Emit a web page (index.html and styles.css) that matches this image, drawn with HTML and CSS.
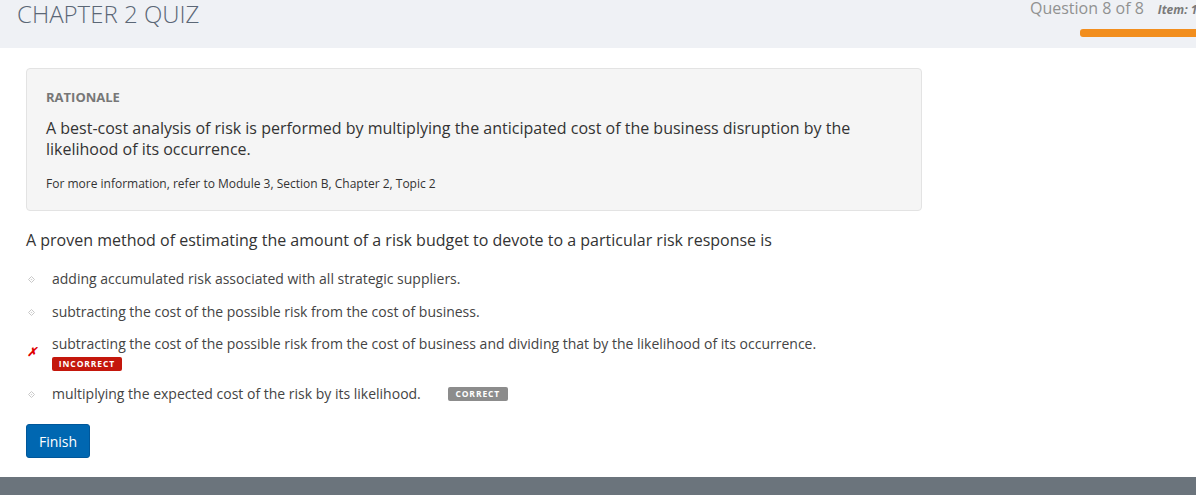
FILE: index.html
```html
<!DOCTYPE html>
<html lang="en">
<head>
<meta charset="utf-8">
<title>Chapter 2 Quiz</title>
<link rel="stylesheet" href="styles.css">
</head>
<body>
<header class="topbar">
  <h1 class="quiz-title">CHAPTER 2 QUIZ</h1>
  <div class="progress">
    <div class="progress-text"><span class="q-count">Question 8 of 8</span><span class="item-label">Item: 1</span></div>
    <div class="progress-bar"></div>
  </div>
</header>
<main class="content">
  <section class="rationale">
    <h2 class="rationale-title">RATIONALE</h2>
    <p class="rationale-body">A best-cost analysis of risk is performed by multiplying the anticipated cost of the business disruption by the likelihood of its occurrence.</p>
    <p class="rationale-ref">For more information, refer to Module 3, Section B, Chapter 2, Topic 2</p>
  </section>
  <p class="question">A proven method of estimating the amount of a risk budget to devote to a particular risk response is</p>
  <ul class="options">
    <li class="option">
      <span class="marker"><svg width="7" height="7" viewBox="0 0 7 7"><path d="M3.5 0.5 L6.5 3.5 L3.5 6.5 L0.5 3.5 Z" fill="none" stroke="#c8c8c8" stroke-width="1"/><circle cx="3.5" cy="3.5" r="0.8" fill="#d4d4d4"/></svg></span>
      <div class="option-body"><span class="option-text">adding accumulated risk associated with all strategic suppliers.</span></div>
    </li>
    <li class="option">
      <span class="marker"><svg width="7" height="7" viewBox="0 0 7 7"><path d="M3.5 0.5 L6.5 3.5 L3.5 6.5 L0.5 3.5 Z" fill="none" stroke="#c8c8c8" stroke-width="1"/><circle cx="3.5" cy="3.5" r="0.8" fill="#d4d4d4"/></svg></span>
      <div class="option-body"><span class="option-text">subtracting the cost of the possible risk from the cost of business.</span></div>
    </li>
    <li class="option option-wrong">
      <span class="marker marker-wrong">&#x2717;</span>
      <div class="option-body option-stack">
        <span class="option-text">subtracting the cost of the possible risk from the cost of business and dividing that by the likelihood of its occurrence.</span>
        <span class="badge badge-incorrect">INCORRECT</span>
      </div>
    </li>
    <li class="option">
      <span class="marker"><svg width="7" height="7" viewBox="0 0 7 7"><path d="M3.5 0.5 L6.5 3.5 L3.5 6.5 L0.5 3.5 Z" fill="none" stroke="#c8c8c8" stroke-width="1"/><circle cx="3.5" cy="3.5" r="0.8" fill="#d4d4d4"/></svg></span>
      <div class="option-body option-inline"><span class="option-text">multiplying the expected cost of the risk by its likelihood.</span><span class="badge badge-correct">CORRECT</span></div>
    </li>
  </ul>
  <button class="finish" type="button">Finish</button>
</main>
<footer class="footer"></footer>
</body>
</html>
```

FILE: styles.css
```css
* { box-sizing: border-box; }
html, body { margin: 0; padding: 0; }
body {
  font-family: "Open Sans", "Liberation Sans", sans-serif;
  color: #333;
  background: #fff;
  overflow: hidden;
  height: 495px;
}
.topbar {
  height: 48px;
  background: #eff1f5;
  display: flex;
  justify-content: space-between;
  align-items: flex-start;
  padding-left: 17px;
}
.quiz-title {
  margin: -1px 0 0;
  font-size: 24px;
  line-height: 30px;
  font-weight: 300;
  color: #5b6776;
  letter-spacing: 0;
}
.progress {
  width: 166px;
  white-space: nowrap;
}
.progress-text {
  display: flex;
  align-items: baseline;
  gap: 14px;
  line-height: 16px;
}
.q-count {
  font-size: 16px;
  color: #919191;
}
.item-label {
  font-size: 12px;
  font-style: italic;
  font-weight: 700;
  color: #7a7a7a;
}
.progress-bar {
  margin-top: 11px;
  margin-left: 50px;
  width: 116px;
  height: 8px;
  background: #f28e1e;
  border-radius: 3px 0 0 3px;
}
.content {
  padding: 20px 0 0 26px;
}
.rationale {
  width: 896px;
  background: #f5f5f5;
  border: 1px solid #e3e3e3;
  border-radius: 4px;
  padding: 20px 19px 17px;
}
.rationale-title {
  margin: 0;
  font-size: 13px;
  line-height: 16px;
  font-weight: 700;
  color: #777;
}
.rationale-body {
  margin: 13px 0 0;
  font-size: 16px;
  line-height: 21px;
  color: #333;
}
.rationale-ref {
  margin: 15px 0 0;
  font-size: 12px;
  line-height: 18px;
  color: #333;
}
.question {
  margin: 18px 0 0;
  font-size: 16px;
  line-height: 22px;
  color: #333;
}
.options {
  list-style: none;
  margin: 18px 0 0;
  padding: 0;
  display: flex;
  flex-direction: column;
  gap: 13px;
}
.option {
  display: flex;
  align-items: flex-start;
}
.option-wrong {
  margin-top: -1px;
}
.marker {
  width: 26px;
  flex: none;
  height: 20px;
  display: flex;
  align-items: center;
  padding-left: 2px;
}
.marker-wrong {
  color: #e00000;
  font-size: 12px;
  font-weight: 700;
  font-style: italic;
  padding-top: 15px;
  padding-left: 1px;
}
.option-body {
  font-size: 14px;
  line-height: 20px;
  color: #444;
}
.option-stack {
  display: flex;
  flex-direction: column;
  align-items: flex-start;
}
.option-inline {
  display: flex;
  align-items: center;
  gap: 27px;
}
.badge {
  display: inline-block;
  color: #fff;
  font-size: 8.5px;
  font-weight: 700;
  letter-spacing: 0.9px;
  line-height: 14px;
  height: 14px;
  border-radius: 2px;
  text-align: center;
}
.badge-incorrect {
  background: #c4170c;
  width: 70px;
  margin-top: 3px;
}
.badge-correct {
  background: #8c8c8c;
  width: 60px;
  margin-top: -1px;
}
.finish {
  margin-top: 20px;
  width: 64px;
  height: 34px;
  background: #0067b1;
  border: 1px solid #00579a;
  border-radius: 3px;
  color: #fff;
  font-family: "Open Sans", "Liberation Sans", sans-serif;
  font-size: 14px;
  padding: 0;
  cursor: pointer;
}
.footer {
  margin-top: 19px;
  height: 40px;
  background: #6b747c;
}
```
